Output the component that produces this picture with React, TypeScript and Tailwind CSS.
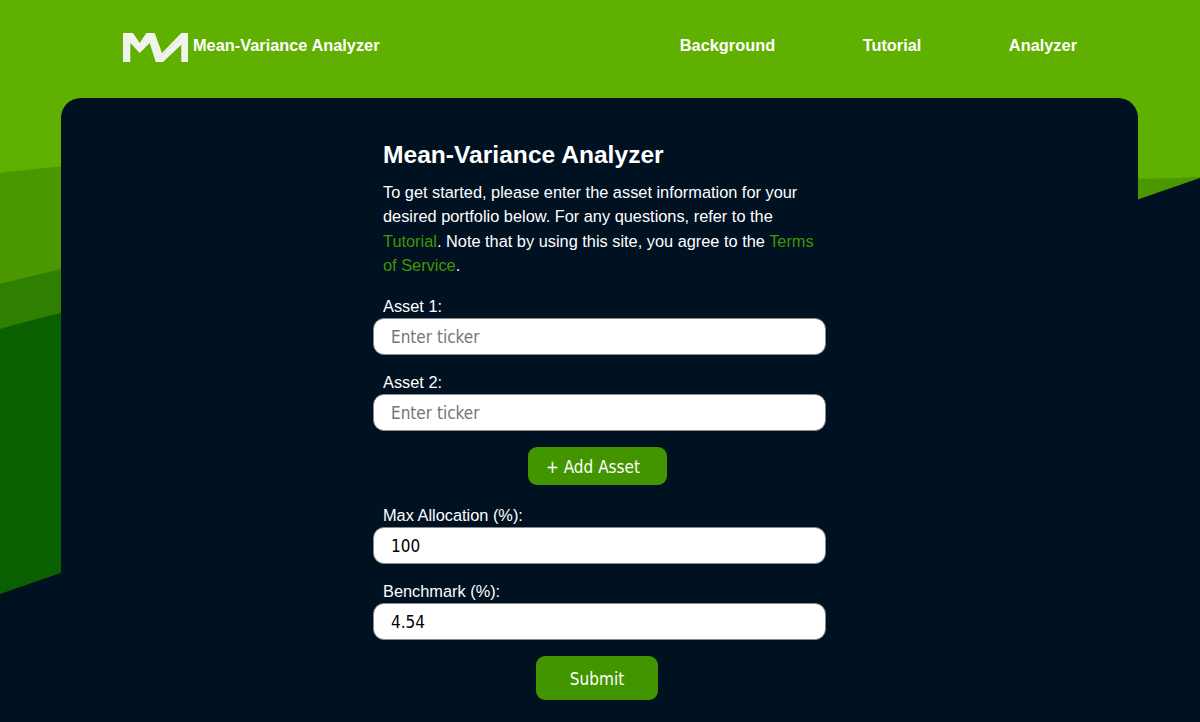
const sans = "font-['Liberation_Sans',Arial,sans-serif]";
const ctl = "font-['DejaVu_Sans_Condensed','DejaVu_Sans',sans-serif]";

function Field({ label, placeholder, value }: { label: string; placeholder?: string; value?: string }) {
  return (
    <label className="block">
      <span className="block pl-2.5 text-[16.35px] leading-[19px] text-white">{label}</span>
      <input
        readOnly
        placeholder={placeholder}
        defaultValue={value}
        className={`${ctl} mt-[2px] block h-[37px] w-full rounded-[11px] border border-[#8a8a8a] bg-white pl-[17px] pt-px text-[17px] text-black outline-none placeholder:text-[#757575]`}
      />
    </label>
  );
}

export default function App() {
  return (
    <div className={`${sans} relative h-[722px] w-full overflow-hidden bg-[#5fb000]`}>
      <svg className="absolute inset-0 h-full w-full" viewBox="0 0 1200 722" preserveAspectRatio="none" aria-hidden="true">
        <path d="M0 173 C 60 166 300 140 700 160 C 900 170 1100 183 1200 177 V722 H0Z" fill="#4a9700" />
        <path d="M0 284 C 20 279 40 274 61 269 C 300 220 800 210 1200 260 V722 H0Z" fill="#2f7f00" />
        <path d="M0 329 C 20 323 40 318 61 313 C 300 260 800 250 1200 300 V722 H0Z" fill="#0a5f00" />
        <path d="M0 594 L1200 178 V722 H0Z" fill="#001122" />
      </svg>

      <header className="relative flex h-[98px] items-center justify-between pb-[7px] pl-[123px] pr-[123px] text-[16.35px] font-bold text-white">
        <div className="flex items-center gap-[5px]">
          <svg className="mt-1" width="65" height="31" viewBox="0 0 65 31" aria-hidden="true">
            <path
              d="M0 1 H10 L16.7 11 L23.3 1 H31.7 L39 21 L58.3 1 H65 V30 H58.3 V12.7 L40 30 H32.7 L26.7 11 L16.7 21 L7.3 11 V30 H0Z"
              fill="#f1f4ec"
            />
            <path d="M36 26 L58 6" stroke="#d5dcc9" strokeWidth="0.8" fill="none" />
          </svg>
          <span>Mean-Variance Analyzer</span>
        </div>
        <nav className="flex gap-[87.5px]">
          <a>Background</a>
          <a>Tutorial</a>
          <a>Analyzer</a>
        </nav>
      </header>

      <main className="relative ml-[61px] mr-[62px] h-[640px] rounded-[20px] bg-[#001122] pt-[42px] text-white">
        <div className="mx-auto w-[453px]">
          <h1 className="pl-2.5 text-[24.6px] font-bold leading-[30px]">Mean-Variance Analyzer</h1>
          <p className="mt-[10px] w-[443px] pl-2.5 text-[16.35px] leading-[24.4px]">
            To get started, please enter the asset information for your desired portfolio below. For any questions, refer to the{" "}
            <a className="text-[#439500]">Tutorial</a>. Note that by using this site, you agree to the{" "}
            <a className="text-[#439500]">Terms of Service</a>.
          </p>
          <div className="mt-[19px] flex flex-col gap-[18px]">
            <Field label="Asset 1:" placeholder="Enter ticker" />
            <Field label="Asset 2:" placeholder="Enter ticker" />
          </div>
          <div className="mt-[16px] flex justify-center pr-[5px]">
            <button className={`${ctl} h-[38px] w-[139px] rounded-[9px] bg-[#439500] pr-2 pt-1 text-[17px] text-white`}>+ Add Asset</button>
          </div>
          <div className="mt-[21px] flex flex-col gap-[18px]">
            <Field label="Max Allocation (%):" value="100" />
            <Field label="Benchmark (%):" value="4.54" />
          </div>
          <div className="mt-[16px] flex justify-center pr-[5px]">
            <button className={`${ctl} h-[44px] w-[122px] rounded-[9px] bg-[#439500] pt-1 text-[17px] text-white`}>Submit</button>
          </div>
        </div>
      </main>
    </div>
  );
}
